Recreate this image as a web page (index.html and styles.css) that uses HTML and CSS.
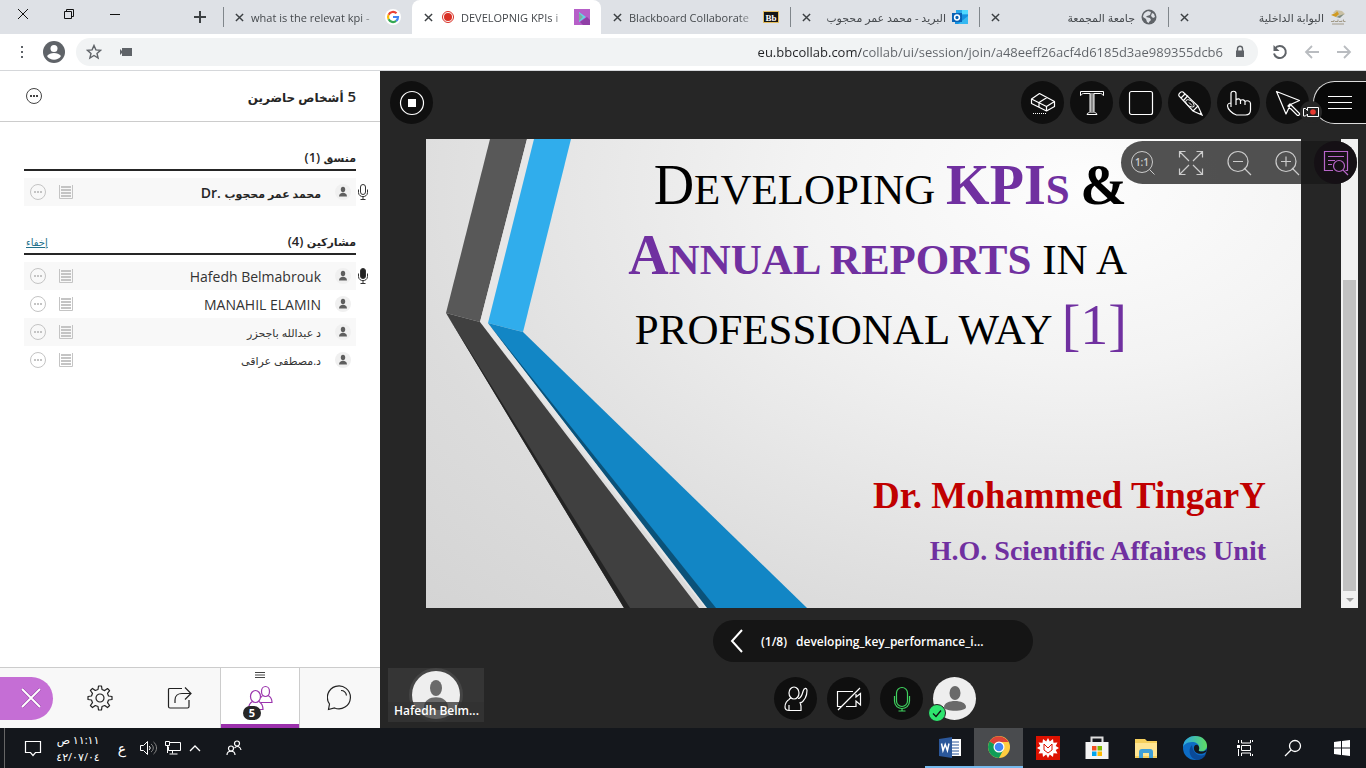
FILE: index.html
```html
<!DOCTYPE html>
<html lang="en">
<head>
    <meta charset="UTF-8">
    <meta name="viewport" content="width=device-width, initial-scale=1.0">
    <title>Blackboard Collaborate</title>
    <link rel="stylesheet" href="styles.css">
</head>
<body>
    <!-- shared icons -->
    <svg class="sprite" aria-hidden="true">
        <symbol id="x" viewBox="0 0 10 10"><path d="M1 1l8 8M9 1L1 9" fill="none" stroke="currentColor" stroke-width="1.6"/></symbol>
        <symbol id="dots" viewBox="0 0 18 18"><circle cx="9" cy="9" r="7.5" fill="none" stroke="currentColor"/><path d="M5 8h2v2H5zM8 8h2v2H8zM11 8h2v2h-2z" fill="currentColor"/></symbol>
        <symbol id="list" viewBox="0 0 14 14"><path d="M.5 0v13.5h13V0" fill="none" stroke="currentColor"/><path d="M2 1h10v2H2zM2 4h10v2H2zM2 7h10v2H2zM2 10h10v2H2z" fill="currentColor"/></symbol>
        <symbol id="person" viewBox="0 0 16 16"><circle cx="8" cy="8" r="8" fill="#f0f0f0"/><ellipse cx="8" cy="5.5" rx="2.2" ry="2.8" fill="#5e5e5e"/><path d="M4 12.500c0-5 8-5 8 0z" fill="#5e5e5e"/></symbol>
        <symbol id="mic" viewBox="0 0 12 18"><rect x="3.5" y="1.5" width="5" height="10" rx="2.5" stroke="currentColor"/><path d="M1.5 6.5v3c0 5.500 9 5.500 9 0v-3M6 13.500V16M3.500 16.500h5" fill="none" stroke="currentColor"/></symbol>
    </svg>

    <div class="tabstrip">
        <div class="window-buttons">
            <button aria-label="Close window"><svg width="12" height="12" viewBox="0 0 12 12"><path d="M1 1l10 10M11 1L1 11" fill="none" stroke="#111"/></svg></button>
            <button aria-label="Restore"><svg width="12" height="12" viewBox="0 0 12 12"><path d="M1.5 3.5h7v7h-7zM3.500 3.500v-2h7v7h-2" fill="none" stroke="#111"/></svg></button>
            <button aria-label="Minimize"><svg width="12" height="12" viewBox="0 0 12 12"><path d="M1 6.500h10" fill="none" stroke="#111"/></svg></button>
            <button class="new-tab" aria-label="New tab"><svg width="12" height="12" viewBox="0 0 12 12"><path d="M6 0v12M0 6h12" stroke="#3c4043" stroke-width="2"/></svg></button>
        </div>
        <div class="tab divided">
            <button class="tab-close" aria-label="Close tab"><svg><use href="#x"/></svg></button>
            <span class="tab-title">what is the relevat kpi -</span>
            <svg class="favicon" viewBox="0 0 16 16"><circle cx="8" cy="8" r="8" fill="#fff"/><g fill="none" stroke-width="2.2"><path d="M11.500 4.300A5 5 0 0 0 3.600 5.700" stroke="#ea4335"/><path d="M3.600 5.700a5 5 0 0 0 0 4.600" stroke="#fbbc05"/><path d="M3.600 10.300a5 5 0 0 0 7.600 1.600" stroke="#34a853"/><path d="M11.200 11.900A5 5 0 0 0 13 8H8" stroke="#4285f4"/></g></svg>
        </div>
        <div class="tab active">
            <button class="tab-close" aria-label="Close tab"><svg><use href="#x"/></svg></button>
            <svg class="recording" width="12" height="12" viewBox="0 0 12 12"><circle cx="6" cy="6" r="5.5" fill="#fff" stroke="#d93025"/><circle cx="6" cy="6" r="4" fill="#d93025"/></svg>
            <span class="tab-title">DEVELOPNIG KPIs i</span>
            <svg class="favicon" viewBox="0 0 16 16"><path d="M0 0h16v16H0z" fill="#b65fc8"/><path d="M6 13l7-5 3 3v5H9z" fill="#8f3fa6"/><path d="M5 3l7 5-7 5z" fill="#63d4e5"/><path d="M5 4l4 4-4 4z" fill="#7fae9a"/></svg>
        </div>
        <div class="tab">
            <button class="tab-close" aria-label="Close tab"><svg><use href="#x"/></svg></button>
            <span class="tab-title">Blackboard Collaborate</span>
            <svg class="favicon" viewBox="0 0 16 16"><path d="M.5 2.500h15v11H.5z" fill="#151515" stroke="#e5bd5b"/><text x="8" y="11.500" text-anchor="middle" class="bb-text">Bb</text></svg>
        </div>
        <div class="tab divided">
            <button class="tab-close" aria-label="Close tab"><svg><use href="#x"/></svg></button>
            <span class="tab-title" dir="rtl">البريد - محمد عمر محجوب</span>
            <svg class="favicon" viewBox="0 0 16 16"><path d="M4 1h12v7H4z" fill="#28a8ea"/><path d="M10 1h6v4h-6z" fill="#50d9ff"/><path d="M3 6h13v9H3z" fill="#1490df"/><path d="M16 7v8H6z" fill="#35b8f1"/><path d="M0 4h10v9H0z" fill="#0a63b5"/><circle cx="5" cy="8.500" r="2.400" fill="none" stroke="#fff" stroke-width="1.500"/></svg>
        </div>
        <div class="tab divided">
            <button class="tab-close" aria-label="Close tab"><svg><use href="#x"/></svg></button>
            <span class="tab-title" dir="rtl">جامعة المجمعة</span>
            <svg class="favicon" viewBox="0 0 16 16"><circle cx="8" cy="8" r="7.5" fill="#5f6368"/><path d="M7 2l3 1-1 3-3 1-1 1 4 1 1 2-2 2v1l-2-1-1-3-3-2c0-3 2-5 5-6zM11 4l2 1 1 3-2 1-2-2z" fill="#dee1e6"/></svg>
        </div>
        <div class="tab divided">
            <button class="tab-close" aria-label="Close tab"><svg><use href="#x"/></svg></button>
            <span class="tab-title" dir="rtl">البوابة الداخلية</span>
            <svg class="favicon" viewBox="0 0 16 16"><path d="M3 4l3-3 6 1 3 3-5 3z" fill="#c9c0a4"/><path d="M1 6c3-2 5-1 6-4l2 3-3 3z" fill="#d09a20"/><path d="M6 8l8-3-4 4z" fill="#7d8b80"/><path d="M1 12.500h3v-1.500M5 12.500h3v-2M9 12.500h3v-1M13.500 10.500v2h2M2 15h12" fill="none" stroke="#a29a88"/></svg>
        </div>
    </div>

    <div class="address-bar">
        <button class="nav-button" aria-label="Menu"><svg width="4" height="14" viewBox="0 0 4 14"><path d="M1 1h2v2H1zM1 6h2v2H1zM1 11h2v2H1z" fill="#5f6368"/></svg></button>
        <button class="profile" aria-label="Profile"><svg width="22" height="22" viewBox="0 0 22 22"><circle cx="11" cy="11" r="11" fill="#5f6368"/><circle cx="11" cy="7.500" r="3.500" fill="#fff"/><path d="M4 15c3-4 11-4 14 0-3 5-11 5-14 0z" fill="#fff"/></svg></button>
        <div class="omnibox">
            <button aria-label="Bookmark"><svg width="16" height="16" viewBox="0 0 16 16"><path d="M8 1.500l1.900 4.400 4.700.4-3.600 3.100 1.100 4.600L8 11.500 3.900 14 5 9.400 1.400 6.300l4.700-.4z" fill="none" stroke="#5f6368" stroke-width="1.400"/></svg></button>
            <button class="camera" aria-label="Camera in use"><svg width="14" height="10" viewBox="0 0 14 10"><path d="M3 1h10v8H3V6L1 8V2l2 2z" fill="#5f6368"/></svg></button>
            <input type="text" class="url" aria-label="Address" value="eu.bbcollab.com/collab/ui/session/join/a48eeff26acf4d6185d3ae989355dcb6">
            <svg width="10" height="14" viewBox="0 0 10 14"><path d="M1 5.500h8V12H1z" fill="#5f6368"/><path d="M2.500 6V3.500c0-3 5-3 5 0V6" fill="none" stroke="#5f6368" stroke-width="1.400"/></svg>
        </div>
        <div class="history">
            <button aria-label="Reload"><svg width="16" height="16" viewBox="0 0 16 16"><path d="M3 4.500a6 6 0 1 1-1 5" fill="none" stroke="#5f6368" stroke-width="2"/><path d="M1.500 1v6h6z" fill="#5f6368"/></svg></button>
            <button aria-label="Forward"><svg width="16" height="16" viewBox="0 0 16 16"><path d="M15 8H2M8 2L2 8l6 6" fill="none" stroke="#b9bcc0" stroke-width="1.800"/></svg></button>
            <button aria-label="Back"><svg width="16" height="16" viewBox="0 0 16 16"><path d="M1 8h13M8 2l6 6-6 6" fill="none" stroke="#b9bcc0" stroke-width="1.800"/></svg></button>
        </div>
    </div>

    <div class="session">
        <div class="sidebar">
            <div class="panel-header">
                <button class="more" aria-label="More"><svg width="18" height="18"><use href="#dots"/></svg></button>
                <h1 dir="rtl">5 <span class="arabic">أشخاص حاضرين</span></h1>
            </div>

            <div class="attendees">
                <div class="group-title"><h2 dir="rtl"><span class="arabic">منسق</span> (1)</h2></div>
                <ul>
                    <li class="moderator">
                        <div class="row shaded">
                            <button aria-label="Options"><svg width="18" height="18"><use href="#dots"/></svg></button>
                            <svg width="14" height="14"><use href="#list"/></svg>
                            <span class="name">Dr. <span class="arabic">محمد عمر محجوب</span></span>
                            <svg width="16" height="16"><use href="#person"/></svg>
                        </div>
                        <svg class="mic" width="12" height="18" fill="none"><use href="#mic"/></svg>
                    </li>
                </ul>

                <div class="group-title"><a href="#">إخفاء</a><h2 dir="rtl"><span class="arabic">مشاركين</span> (4)</h2></div>
                <ul>
                    <li>
                        <div class="row shaded">
                            <button aria-label="Options"><svg width="18" height="18"><use href="#dots"/></svg></button>
                            <svg width="14" height="14"><use href="#list"/></svg>
                            <span class="name">Hafedh Belmabrouk</span>
                            <svg width="16" height="16"><use href="#person"/></svg>
                        </div>
                        <svg class="mic" width="12" height="18" fill="#222"><use href="#mic"/></svg>
                    </li>
                    <li>
                        <div class="row">
                            <button aria-label="Options"><svg width="18" height="18"><use href="#dots"/></svg></button>
                            <svg width="14" height="14"><use href="#list"/></svg>
                            <span class="name">MANAHIL ELAMIN</span>
                            <svg width="16" height="16"><use href="#person"/></svg>
                        </div>
                    </li>
                    <li>
                        <div class="row shaded">
                            <button aria-label="Options"><svg width="18" height="18"><use href="#dots"/></svg></button>
                            <svg width="14" height="14"><use href="#list"/></svg>
                            <span class="name arabic" dir="rtl">د عبدالله باجحزر</span>
                            <svg width="16" height="16"><use href="#person"/></svg>
                        </div>
                    </li>
                    <li>
                        <div class="row">
                            <button aria-label="Options"><svg width="18" height="18"><use href="#dots"/></svg></button>
                            <svg width="14" height="14"><use href="#list"/></svg>
                            <span class="name arabic" dir="rtl">د.مصطفى عراقى</span>
                            <svg width="16" height="16"><use href="#person"/></svg>
                        </div>
                    </li>
                </ul>
            </div>

            <div class="panel-tabs">
                <button class="close-panel" aria-label="Close panel"><svg width="22" height="22" viewBox="0 0 22 22"><path d="M2 2l18 18M20 2L2 20" stroke="#8c3a9b" stroke-width="3"/><path d="M2 2l18 18M20 2L2 20" stroke="#fff" stroke-width="2"/></svg></button>
                <button aria-label="Settings"><svg width="26" height="26" viewBox="-13 -13 26 26"><path d="M-2-8.500l.5-3.500h3l.5 3.500 2.700 1.100 2.800-2.100 2.100 2.100-2.100 2.800L8.500-2l3.500.5v3L8.500 2l-1 2.700 2.100 2.800-2.100 2.100-2.800-2.100L2 8.500 1.500 12h-3L-2 8.500l-2.700-1-2.800 2.100-2.100-2.100 2.100-2.800L-8.500 2-12 1.500v-3L-8.500-2l1-2.700-2.100-2.800 2.100-2.100 2.800 2.100z" fill="none" stroke="#222" stroke-width="1.200" stroke-linejoin="round"/><circle r="4" fill="none" stroke="#222" stroke-width="1.200"/></svg></button>
                <button aria-label="Share content"><svg width="26" height="24" viewBox="0 0 26 24"><path d="M15 2.500H2.500c-1 0-1 .5-1 1v17c0 1 .5 1.500 1.500 1.500h17.500c1 0 1.500-.5 1.500-1.500V14M8 17v-3c0-4 3-6.500 7-6.500h9M18 1.500l6 6-6 6" fill="none" stroke="#222" stroke-width="1.200"/></svg></button>
                <button class="selected" aria-label="Attendees">
                    <svg class="grip" width="12" height="6" viewBox="0 0 12 6"><path d="M1 .5h10M1 3h10M1 5.500h10" stroke="#444"/></svg>
                    <svg width="26" height="26" viewBox="0 0 26 26"><g fill="none" stroke="#9b35ad" stroke-width="1.200"><ellipse cx="18.500" cy="6.500" rx="4" ry="5"/><ellipse cx="8.500" cy="11.500" rx="5" ry="6"/><path d="M15.500 10.500L14 12.500M21 10.500c3 1.500 4 3 4 7H14M12 16.500c3 2 4 4 4 8H1.500c0-4 1-6.500 4-8"/></g></svg>
                    <span class="count">5</span>
                </button>
                <button aria-label="Chat"><svg width="26" height="26" viewBox="0 0 26 26"><path d="M1.500 24.500l1-5.500a11.500 11.500 0 1 1 5 4zM14 5.500c3 0 5 2 5.500 5" fill="none" stroke="#222" stroke-width="1.200"/></svg></button>
            </div>
        </div>

        <div class="stage">
            <div class="toolbar">
                <button class="round" aria-label="Stop sharing"><svg width="26" height="26" viewBox="0 0 26 26"><circle cx="13" cy="13" r="11.500" fill="none" stroke="#fff" stroke-width="1.200"/><path d="M9 9h8v8H9z" fill="#fff"/></svg></button>
                <div class="tools">
                    <button class="round" aria-label="Eraser"><svg width="26" height="26" viewBox="0 0 26 26"><path d="M1.500 9l8-5.500 15 8v5l-8 4.500-15-7.500zM1.500 9l15 7.500 8-5M16.500 16.500V21M9 12.500l8-5M9 12.500v4.500" fill="none" stroke="#fff" stroke-width="1.200" stroke-linejoin="round"/><path d="M3 23.500h13" stroke="#fff" stroke-dasharray="1 1"/></svg></button>
                    <button class="round" aria-label="Text"><svg width="26" height="26" viewBox="0 0 26 26"><path d="M11 3h4v20h-4z" fill="#888"/><path d="M1.500 5.500V1.500h23v4c-1 0-1-2-3-2H15v18c0 1.500 3 1 3 3H8c0-2 3-1.500 3-3v-18H4.500c-2 0-2 2-3 2z" fill="none" stroke="#fff"/></svg></button>
                    <button class="round" aria-label="Shape"><svg width="26" height="26" viewBox="0 0 26 26"><rect x="1.500" y="1.500" width="23" height="23" rx="2" fill="none" stroke="#fff" stroke-width="1.200"/></svg></button>
                    <button class="round" aria-label="Pencil"><svg width="26" height="26" viewBox="0 0 26 26"><path d="M2 6c-1-2 2-5 4-4l15 14 4 9-9-4zM4 8l4.500-4.500M6.500 10.500l4.500-5M16 21l5-5M23 23l2 2" fill="none" stroke="#fff" stroke-width="1.200"/><path d="M9 10.500c3-3 9 3 8 6-3 2-10-3-8-6zM12 12.500l3 3" fill="none" stroke="#fff"/></svg></button>
                    <button class="round" aria-label="Pointer"><svg width="26" height="26" viewBox="0 0 26 26"><path d="M5 17V3.500c0-3 5-3 5 0V10c2-2 4-1 4.500.5 2-1.500 4-.5 4.500 1 2-1.500 5.500-.5 5.500 2V20c0 3-2 5-5 5h-9c-4-1-9-6-9-9 0-2 2-3 3.500-3M10 10v5M14.500 10.500V14M19 11.500V15" fill="none" stroke="#fff" stroke-width="1.200"/></svg></button>
                    <button class="round" aria-label="Select"><svg width="26" height="26" viewBox="0 0 26 26"><path d="M1.500 1.500l23 9-9 4-4.500 9.500zM13 16l2-2 10 10-2 2z" fill="none" stroke="#fff" stroke-width="1.200" stroke-linejoin="round"/></svg></button>
                </div>
                <button class="menu" aria-label="Session menu"><svg width="26" height="16" viewBox="0 0 26 16"><path d="M1 1.500h24M1 7.500h24M1 13.500h24" stroke="#fff"/></svg></button>
                <div class="rec-badge"><svg width="16" height="12" viewBox="0 0 16 12"><path d="M4.500 1.500h11v9h-11V8l-2 2H.5V2.500h2l2 2z" fill="#222" stroke="#fff"/><circle cx="10" cy="6" r="2.800" fill="#e8392f"/></svg></div>
            </div>

            <div class="content">
                <div class="slide">
                    <svg class="ribbons" viewBox="0 0 875 469" preserveAspectRatio="none">
                        <path d="M64 0h37L54 183l-34-9z" fill="#585858"/>
                        <path d="M101 0h7L62 184l229 285h-12L54 183z" fill="#e6e6e6"/>
                        <path d="M20 174l34 9 219 286h-75z" fill="#404040"/>
                        <path d="M20 174l178 295h6z" fill="#232323"/>
                        <path d="M108 0h37L97 193l-35-9z" fill="#30adec"/>
                        <path d="M62 184l35 9 284 276h-99z" fill="#1286c5"/>
                        <path d="M62 184l219 285h9z" fill="#0b5279"/>
                    </svg>
                    <div class="slide-title">
                        <span class="cap">D</span>eveloping <b class="purple"><span class="cap">KPI</span>s</b> <b class="cap">&amp;</b><br>
                        <b class="purple"><span class="cap">A</span>nnual reports</b> in a<br>
                        professional way <span class="cap purple">[1]</span>
                    </div>
                    <div class="presenter">Dr. Mohammed TingarY</div>
                    <div class="unit">H.O. Scientific Affaires Unit</div>
                </div>
                <div class="scrollbar">
                    <div class="thumb"></div>
                    <svg width="17" height="17" viewBox="0 0 17 17"><path d="M5 7h8l-4 4z" fill="#a0a0a0"/></svg>
                </div>
                <div class="zoom-bar">
                    <button aria-label="Actual size"><svg width="26" height="26" viewBox="0 0 26 26"><circle cx="12" cy="12" r="10.500" fill="none" stroke="#ccc"/><path d="M19.500 19.500l5 5" stroke="#ccc"/><text x="12" y="15.500" text-anchor="middle" class="ratio">1:1</text></svg></button>
                    <button aria-label="Best fit"><svg width="26" height="26" viewBox="0 0 26 26"><path d="M1.500 7.500v-6h6M18.500 1.500h6v6M24.500 18.500v6h-6M7.500 24.500h-6v-6M2 2l9 9M24 2l-9 9M24 24l-9-9M2 24l9-9" fill="none" stroke="#ccc" stroke-width="1.200"/></svg></button>
                    <button aria-label="Zoom out"><svg width="26" height="26" viewBox="0 0 26 26"><path d="M18 18l7 7M7 11.500h10" stroke="#ccc" stroke-width="1.200"/><circle cx="12" cy="11.500" r="10" fill="none" stroke="#ccc" stroke-width="1.200"/></svg></button>
                    <button aria-label="Zoom in"><svg width="26" height="26" viewBox="0 0 26 26"><path d="M18 18l7 7M7 11.500h10M12 6.500v10" stroke="#ccc" stroke-width="1.200"/><circle cx="12" cy="11.500" r="10" fill="none" stroke="#ccc" stroke-width="1.200"/></svg></button>
                    <button class="round view-tools" aria-label="View controls"><svg width="26" height="26" viewBox="0 0 26 26"><path d="M10 20.500H1.500v-19h23v19h-2M5 6.500h16M5 10.500h7M5 14.500h4M20 20l5 5" fill="none" stroke="#b765c8" stroke-width="1.200"/><circle cx="16" cy="16" r="5.500" fill="none" stroke="#b765c8" stroke-width="1.200"/></svg></button>
                </div>
            </div>

            <div class="pager">
                <button aria-label="Previous slide"><svg width="14" height="24" viewBox="0 0 14 24"><path d="M12 1L2 12l10 11" fill="none" stroke="#fff" stroke-width="2"/></svg></button>
                <span>(1/8)</span>
                <span>developing_key_performance_i...</span>
            </div>

            <div class="bottom">
                <div class="video-tile">
                    <svg width="54" height="54" viewBox="0 0 54 54"><circle cx="27" cy="27" r="27" fill="#454545"/><circle cx="27" cy="27" r="24" fill="#eee"/><ellipse cx="27" cy="20" rx="6" ry="8" fill="#6a6a6a"/><path d="M15 39c0-13 24-13 24 0v3H15z" fill="#6a6a6a"/></svg>
                    <div class="tile-name">Hafedh Belm...</div>
                </div>
                <div class="call-controls">
                    <button class="round" aria-label="Raise hand"><svg width="26" height="26" viewBox="0 0 26 26"><path d="M6 24.500c-2 0-4-1-4-3.500 0-4 1-6 5-8M6 24.500V19M6 24.500h12V20l-1-4M15 12.500c3 0 4-3 5-7 1-4 4-4 4-1 0 5-2 10-7 13M8 12l-2 1" fill="none" stroke="#fff" stroke-width="1.200"/><ellipse cx="11" cy="7" rx="5" ry="6" fill="none" stroke="#fff" stroke-width="1.200"/></svg></button>
                    <button class="round" aria-label="Share video"><svg width="26" height="26" viewBox="0 0 26 26"><path d="M17 5.500H1.500v15H5M10 20.500h10V15l4.500 4V7.500L20 11V8M24 2L2 24" fill="none" stroke="#fff" stroke-width="1.200"/></svg></button>
                    <button class="round" aria-label="Mute audio"><svg width="26" height="26" viewBox="0 0 26 26"><rect x="7.500" y="1.500" width="11" height="19" rx="5.500" fill="none" stroke="#3fd35f" stroke-width="1.200"/><path d="M5.500 10v5c0 10 15 10 15 0v-5M13 22.500v3M9.500 25h7" fill="none" stroke="#3fd35f" stroke-width="1.200"/></svg></button>
                    <button class="round me" aria-label="My status"><svg width="43" height="43" viewBox="0 0 43 43"><ellipse cx="22" cy="16" rx="5.500" ry="7" fill="#6a6a6a"/><path d="M11 30c0-8 22-8 22 0 0 5-22 5-22 0z" fill="#6a6a6a"/></svg>
                        <svg class="status" width="18" height="18" viewBox="0 0 18 18"><circle cx="9" cy="9" r="8.500" fill="#2ee46e" stroke="#222"/><path d="M5 9.500l3 3 5-6" fill="none" stroke="#111" stroke-width="1.300"/></svg></button>
                </div>
            </div>
        </div>
    </div>

    <div class="taskbar">
        <div class="tray">
            <button aria-label="Notifications"><svg width="18" height="18" viewBox="0 0 18 18"><path d="M1.500 2.500h15v11h-5l-2.500 3-2.500-3h-5z" fill="none" stroke="#fff" stroke-width="1.200"/></svg></button>
            <div class="clock" dir="rtl"><span>١١:١١ ص</span><span>٤٢/٠٧/٠٤</span></div>
            <button class="language" aria-label="Input language">ع</button>
            <button aria-label="Volume"><svg width="18" height="16" viewBox="0 0 18 16"><path d="M1.500 5.500h3l4-4v13l-4-4h-3z" fill="none" stroke="#fff"/><path d="M10 6c1.500 1 1.500 3 0 4" fill="none" stroke="#fff"/><path d="M12 4c3 2 3 6 0 8M14.500 2c4 3 4 9 0 12" fill="none" stroke="#888"/></svg></button>
            <button aria-label="Network"><svg width="18" height="16" viewBox="0 0 18 16"><path d="M6 2.500h10.500v8h-12V6.500M8.500 10.500v3M5.500 14h8M1.500 1.500h4v4h-4zM3.500 5.500V13" fill="none" stroke="#fff"/></svg></button>
            <button aria-label="Show hidden icons"><svg width="12" height="8" viewBox="0 0 12 8"><path d="M1 7l5-5 5 5" fill="none" stroke="#fff" stroke-width="1.300"/></svg></button>
            <button class="people" aria-label="People"><svg width="16" height="16" viewBox="0 0 16 16"><g fill="none" stroke="#fff" stroke-width="1.200"><circle cx="5" cy="8.500" r="2.500"/><circle cx="11" cy="3.500" r="2.500"/><path d="M1 15c0-5 8-5 8 0M8.500 8c3-3 6-1 6.500 2"/></g></svg></button>
        </div>
        <div class="apps">
            <button class="running" aria-label="Word"><svg width="24" height="24" viewBox="0 0 24 24"><path d="M12 4h11v17H12z" fill="#fff"/><path d="M14 7h7M14 10h7M14 13h7M14 16h7M14 19h7" stroke="#2b579a"/><path d="M1 4l13-2v21L1 21z" fill="#2b579a"/><path d="M3.500 8.500l1.500 7 2.200-6 2.200 6 1.600-7" fill="none" stroke="#fff" stroke-width="1.500"/></svg></button>
            <button class="running current" aria-label="Chrome"><svg width="24" height="24" viewBox="0 0 24 24"><circle cx="12" cy="12" r="11" fill="#ffcd40"/><path d="M12 12L2.500 6.500a11 11 0 0 1 19 .5H12z" fill="#db4437"/><path d="M12 12l-9.500-5.500A11 11 0 0 0 12 23l4.500-8.500z" fill="#0f9d58"/><circle cx="12" cy="12" r="5.500" fill="#fff"/><circle cx="12" cy="12" r="4.300" fill="#4285f4"/></svg></button>
            <button aria-label="Mathematica"><svg width="24" height="24" viewBox="0 0 24 24"><path d="M0 0h24v24H0z" fill="#dd1100"/><path d="M12 2l1.800 3.500L17 3l.5 3.800 4-.3-1.800 3.500L23 12l-3.300 2 1.800 3.500-4-.3L17 21l-3.200-2.500L12 22l-1.800-3.500L7 21l-.5-3.800-4 .3L4.300 14 1 12l3.300-2-1.800-3.500 4 .3L7 3l3.200 2.500z" fill="#fff"/><path d="M8 14V8l4 4 4-4v6l-4 3z" fill="none" stroke="#dd1100"/></svg></button>
            <button aria-label="Store"><svg width="24" height="24" viewBox="0 0 24 24"><path d="M6.500 6V1.500h11V6" fill="none" stroke="#ddd" stroke-width="2"/><path d="M.5 6h23v17H.5z" fill="#f4f4f4"/><path d="M7 10h4.500v4.500H7z" fill="#f25022"/><path d="M12.500 10H17v4.500h-4.500z" fill="#7fba00"/><path d="M7 15.500h4.500V20H7z" fill="#00a4ef"/><path d="M12.500 15.500H17V20h-4.500z" fill="#ffb900"/></svg></button>
            <button aria-label="File Explorer"><svg width="24" height="24" viewBox="0 0 24 24"><path d="M1 3h10l2 2h10v17H1z" fill="#f5cf5c"/><path d="M1 7h22v13H1z" fill="#ffe593"/><path d="M5 22v-6c0-2 1-3 3-3h8c2 0 3 1 3 3v6h-4v-5H9v5z" fill="#3f9fd8"/></svg></button>
            <button aria-label="Edge"><svg width="24" height="24" viewBox="0 0 24 24"><defs><linearGradient id="edge-top"><stop offset="0" stop-color="#2aa5e5"/><stop offset="1" stop-color="#5fdc62"/></linearGradient></defs><circle cx="12" cy="12" r="12" fill="#0d6cc4"/><path d="M0 12C0 3 7 0 12 0c8 0 12 5 12 10 0 4-4 6-8 5-2-1 0-2 0-4 0-3-3-5-7-5-5 0-9 3-9 6z" fill="url(#edge-top)"/><path d="M9 9c-5 5-2 14 5 15 4 0 8-3 9-6-4 3-13 2-14-9z" fill="#0a4a98"/><path d="M11 11c-1 6 6 9 12 5l1-3c-2 3-6 3-8 2-1-1 1-2 0-4-1-3-4-3-5 0z" fill="#14171c"/></svg></button>
            <button aria-label="Task view"><svg width="18" height="18" viewBox="0 0 18 18"><path d="M3.500 1v3M3.500 10v7M6.500 1v3h9V1M6.500 17v-3h9v3M6.500 6.500h9v5h-9zM17.500 1v2M17.500 15v2" fill="none" stroke="#fff"/><path d="M2 6h3v3H2z" fill="#fff"/></svg></button>
            <button aria-label="Search"><svg width="18" height="18" viewBox="0 0 18 18"><circle cx="11" cy="7" r="5.500" fill="none" stroke="#fff" stroke-width="1.300"/><path d="M7 11l-6 6" stroke="#fff" stroke-width="1.300"/></svg></button>
            <button aria-label="Start"><svg width="16" height="16" viewBox="0 0 16 16"><path d="M0 2l7-1v6.500H0zM8 1l8-1v7.500H8zM0 8.500h7V15l-7-1zM8 8.500h8V16l-8-1z" fill="#fff"/></svg></button>
        </div>
    </div>
</body>
</html>
```

FILE: styles.css
```css
* {
    box-sizing: border-box;
    margin: 0;
    padding: 0;
}

body {
    font-family: "Open Sans", "Noto Sans", "DejaVu Sans", sans-serif;
    font-size: 14px;
    color: #262626;
    height: 100vh;
    display: flex;
    flex-direction: column;
    overflow: hidden;
}

button {
    background: none;
    border: none;
    font: inherit;
    color: inherit;
    display: flex;
    align-items: center;
    justify-content: center;
    cursor: pointer;
}

ul {
    list-style: none;
}

svg {
    flex-shrink: 0;
}

.sprite {
    position: absolute;
    width: 0;
    height: 0;
}

/* browser tabs */
.tabstrip {
    display: flex;
    height: 34px;
    background: #dee1e6;
    padding-right: 9px;
}

.window-buttons {
    display: flex;
    width: 223px;
}

.window-buttons button {
    width: 46px;
    height: 28px;
}

.window-buttons .new-tab {
    height: 34px;
    margin-left: auto;
}

.tab {
    position: relative;
    flex: 1;
    min-width: 0;
    display: flex;
    align-items: center;
    gap: 6px;
    padding: 0 11px 0 10px;
    font-size: 11px;
    color: #45494d;
}

.tab.divided::before {
    content: "";
    position: absolute;
    left: 0;
    top: 7px;
    height: 20px;
    width: 1px;
    background: #80868b;
}

.tab.active {
    background: #fff;
    border-radius: 8px 8px 0 0;
}

.tab-close {
    width: 12px;
    height: 16px;
    color: #3c4043;
}

.tab-close svg {
    width: 9px;
    height: 9px;
}

.tab-title {
    flex: 1;
    overflow: hidden;
    white-space: nowrap;
    mask-image: linear-gradient(to right, #000 85%, transparent);
}

.tab-title[dir="rtl"] {
    mask-image: linear-gradient(to left, #000 90%, transparent);
}

.recording {
    margin: 0 1px 0 2px;
}

.favicon {
    width: 16px;
    height: 16px;
}

.bb-text {
    font: bold 9px "Liberation Serif", serif;
    fill: #fff;
}

/* address bar */
.address-bar {
    display: flex;
    align-items: center;
    height: 37px;
    background: #fff;
    border-bottom: 1px solid #d5d7da;
}

.nav-button {
    width: 43px;
    height: 28px;
}

.profile {
    width: 22px;
    height: 22px;
    margin-right: 11px;
}

.omnibox {
    flex: 1;
    display: flex;
    align-items: center;
    gap: 12px;
    height: 28px;
    padding: 0 13px 0 10px;
    border-radius: 14px;
    background: #f1f3f4;
}

.camera {
    margin-left: 5px;
}

.url {
    flex: 1;
    border: none;
    outline: none;
    font: 13px "Open Sans", "Noto Sans", sans-serif;
    text-align: right;
    color: transparent;
    /* host part darker than the path */
    background: linear-gradient(to left, #5f6368 362px, #202124 362px);
    background-clip: text;
}

.history {
    display: flex;
    gap: 16px;
    padding: 0 14px;
}

/* session */
.session {
    flex: 1;
    min-height: 0;
    display: flex;
}

.sidebar {
    width: 380px;
    display: flex;
    flex-direction: column;
    background: #fff;
}

.panel-header {
    display: flex;
    align-items: center;
    justify-content: space-between;
    height: 51px;
    padding: 0 24px 0 25px;
    border-bottom: 1px solid #ccc;
}

.panel-header h1 {
    font-size: 15px;
    font-weight: 600;
}

.panel-header .arabic {
    font-size: 12px;
}

.more {
    color: #444;
}

.attendees {
    flex: 1;
    padding: 24px 10px 0 24px;
}

.group-title {
    display: flex;
    align-items: center;
    height: 25px;
    margin: 0 14px 7px 0;
    border-bottom: 2px solid #262626;
}

.group-title h2 {
    font-size: 13px;
    font-weight: 600;
    line-height: 20px;
    margin-left: auto;
}

.group-title .arabic {
    font-size: 11px;
}

.group-title a {
    color: #23708a;
    font-size: 10px;
    padding-left: 2px;
}

.attendees ul {
    margin-bottom: 24px;
}

.attendees li {
    display: flex;
    align-items: center;
}

.row {
    width: 332px;
    height: 28px;
    display: flex;
    align-items: center;
    gap: 12px;
    padding: 0 5px;
    color: #c4c4c4;
}

.row.shaded {
    background: #f8f8f8;
}

.name {
    flex: 1;
    text-align: right;
    margin-right: 2px;
    color: #333;
}

.name.arabic,
.name .arabic {
    font-size: 11px;
}

.moderator .name {
    font-weight: 600;
    color: #262626;
}

.mic {
    margin-left: 1px;
    color: #333;
}

.panel-tabs {
    display: grid;
    grid-template-columns: 60px repeat(4, 1fr);
    align-items: center;
    height: 61px;
    border-top: 1px solid #ccc;
    background: #f8f8f8;
}

.panel-tabs button {
    height: 60px;
}

.panel-tabs .close-panel {
    width: 53px;
    height: 43px;
    padding-left: 9px;
    border-radius: 0 22px 22px 0;
    background: #c56ed5;
}

.panel-tabs .selected {
    position: relative;
    background: #fff;
    border: 1px solid #ccc;
    border-width: 0 1px;
    box-shadow: inset 0 -4px #9b30ac;
}

.grip {
    position: absolute;
    top: 4px;
}

.count {
    position: absolute;
    left: 22px;
    bottom: 8px;
    width: 18px;
    border-radius: 7px;
    background: #262626;
    color: #fff;
    font-size: 11px;
    font-weight: 700;
    line-height: 14px;
}

/* stage */
.stage {
    flex: 1;
    min-width: 0;
    display: flex;
    flex-direction: column;
    background: #262626;
    color: #fff;
}

.round {
    width: 43px;
    height: 43px;
    border-radius: 50%;
    background: #0f0f0f;
}

.toolbar {
    position: relative;
    display: flex;
    align-items: center;
    height: 68px;
    padding: 0 0 5px 10px;
}

.tools {
    display: flex;
    gap: 6px;
    margin: 0 4px 0 auto;
}

.menu {
    width: 53px;
    height: 43px;
    border: 1px solid #ddd;
    border-right: none;
    border-radius: 22px 0 0 22px;
    background: #080808;
}

.rec-badge {
    position: absolute;
    right: 44px;
    top: 30px;
    width: 22px;
    height: 22px;
    border-radius: 50%;
    background: #262626;
    display: flex;
    align-items: center;
    justify-content: center;
}

.content {
    position: relative;
    flex: 1;
    min-height: 0;
    display: flex;
    gap: 40px;
    padding: 0 8px 0 46px;
}

.slide {
    position: relative;
    flex: 1;
    padding: 16px 35px 0 0;
    overflow: hidden;
    text-align: right;
    background: radial-gradient(ellipse at 75% 10%, #fdfdfd 0%, #f3f3f3 30%, #dcdcdc 75%, #d4d4d4 100%);
    font-family: "Liberation Serif", serif;
}

.ribbons {
    position: absolute;
    left: 0;
    top: 0;
    width: 100%;
    height: 100%;
}

.slide-title {
    position: relative;
    padding-right: 139px;
    font-size: 43px;
    line-height: 70px;
    text-transform: uppercase;
    color: #000;
}

.slide-title .cap {
    font-size: 56px;
    line-height: 1;
}

.purple {
    color: #7030a0;
}

.presenter {
    margin-top: 101px;
    font-size: 37px;
    font-weight: bold;
    line-height: 60px;
    color: #c00000;
}

.unit {
    font-size: 28px;
    font-weight: bold;
    line-height: 50px;
    color: #7030a0;
}

.scrollbar {
    width: 17px;
    background: #f1f1f1;
    display: flex;
    flex-direction: column;
    align-items: center;
}

.thumb {
    width: 13px;
    margin-top: 141px;
    flex: 1;
    background: #c1c1c1;
}

.zoom-bar {
    position: absolute;
    right: 9px;
    top: 2px;
    height: 43px;
    padding-left: 9px;
    display: flex;
    align-items: center;
    gap: 22px;
    border-radius: 22px;
    background: rgba(24, 24, 24, 0.75);
}

.zoom-bar .view-tools {
    margin-left: -8px;
    background: #151015;
}

.ratio {
    font: 600 10px "Open Sans", sans-serif;
    fill: #ccc;
}

.pager {
    align-self: center;
    display: flex;
    align-items: center;
    width: 320px;
    height: 42px;
    margin-top: 12px;
    padding-left: 17px;
    border-radius: 21px;
    background: #151515;
    font-size: 12px;
    font-weight: 600;
}

.pager span {
    margin-left: 9px;
}

.pager button + span {
    margin-left: 17px;
}

.bottom {
    display: grid;
    grid-template-columns: 1fr auto 1fr;
    height: 66px;
    padding: 6px 8px;
}

.video-tile {
    position: relative;
    width: 96px;
    height: 54px;
    display: flex;
    justify-content: center;
    overflow: hidden;
    background: #353535;
}

.tile-name {
    position: absolute;
    left: 0;
    right: 0;
    bottom: 0;
    height: 20px;
    padding-left: 6px;
    background: rgba(50, 50, 50, 0.75);
    font-size: 12px;
    font-weight: 600;
    line-height: 18px;
}

.call-controls {
    display: flex;
    gap: 10px;
    padding: 9px 0 0 4px;
}

.me {
    position: relative;
    background: #eee;
}

.status {
    position: absolute;
    left: -5px;
    bottom: -2px;
}

/* taskbar */
.taskbar {
    display: flex;
    justify-content: space-between;
    height: 40px;
    background: #14171c;
    color: #fff;
}

.tray {
    display: flex;
    align-items: center;
    gap: 7px;
    margin-left: 4px;
    padding-left: 19px;
    border-left: 1px solid #666;
}

.clock {
    display: flex;
    flex-direction: column;
    align-items: center;
    width: 54px;
    margin-left: 2px;
    font-size: 11px;
    line-height: 17px;
}

.language {
    width: 20px;
}

.people {
    margin-left: 18px;
}

.apps {
    display: flex;
}

.apps button {
    width: 49px;
    height: 40px;
}

.apps .running {
    border-bottom: 2px solid #76b9ed;
}

.apps .current {
    background: #494b4e;
}
```
